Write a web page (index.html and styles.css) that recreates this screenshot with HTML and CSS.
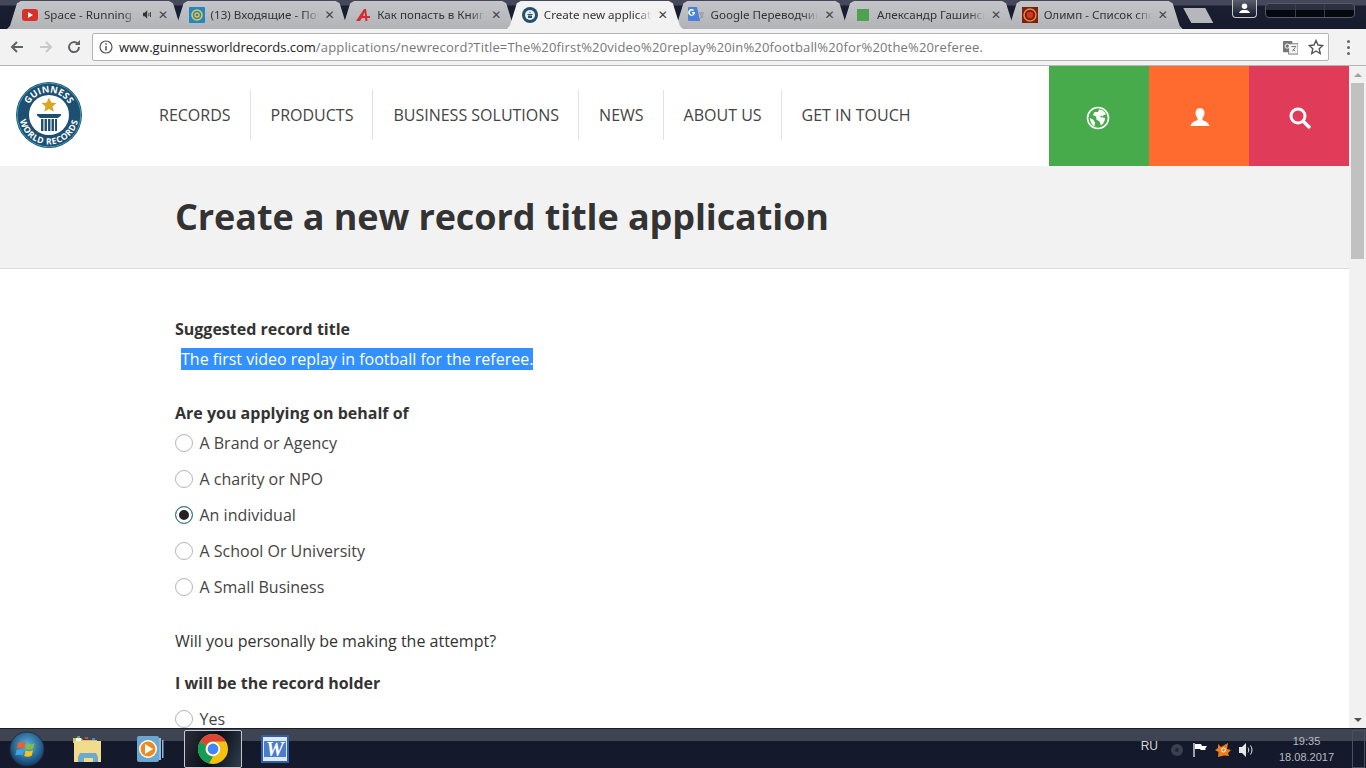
FILE: index.html
```html
<!DOCTYPE html>
<html lang="en">
<head>
<meta charset="utf-8">
<title>Create a new record title application</title>
<link rel="stylesheet" href="styles.css">
</head>
<body>
<div class="screen">
  <div class="tabstrip">
    <div class="tab">
      <svg class="fav" viewBox="0 0 16 16"><rect y="2" width="16" height="12" rx="3" fill="#d9302a"/><path d="M6 5l5 3-5 3z" fill="#fff"/></svg>
      <span class="tab-title">Space - Running</span>
      <svg class="speaker" viewBox="0 0 12 10"><path d="M0 3h2l3-3v10L2 7H0z" fill="#333"/><path d="M7 3v4M9 2v6" stroke="#333" fill="none"/></svg>
      <span class="tab-x">✕</span>
    </div>
    <div class="tab">
      <svg class="fav" viewBox="0 0 16 16"><rect width="16" height="16" rx="1" fill="#1f87c9"/><circle cx="8" cy="8" r="5" fill="none" stroke="#f2c335" stroke-width="1.6"/><circle cx="8" cy="8" r="2" fill="none" stroke="#f2c335" stroke-width="1.4"/></svg>
      <span class="tab-title">(13) Входящие - Почта</span>
      <span class="tab-x">✕</span>
    </div>
    <div class="tab">
      <svg class="fav" viewBox="0 0 16 16"><path d="M1 14L9 2h2l1 7h3v2h-3l.5 3h-2L10 11H7l-2 3zM8 9h2l-.5-4z" fill="#d8292f"/></svg>
      <span class="tab-title">Как попасть в Книгу</span>
      <span class="tab-x">✕</span>
    </div>
    <div class="tab tab-active">
      <svg class="fav" viewBox="0 0 16 16"><circle cx="8" cy="8" r="8" fill="#24506e"/><circle cx="8" cy="8" r="5" fill="#e8eef2"/><path d="M8 4.2l.8 1.6H7.2zM5.5 7h5v1h-5zM6 8.5h4V11H6z" fill="#24506e"/></svg>
      <span class="tab-title">Create new application</span>
      <span class="tab-x">✕</span>
    </div>
    <div class="tab">
      <svg class="fav" viewBox="0 0 16 16"><path d="M0 1a1 1 0 0 1 1-1h8l3 14H1a1 1 0 0 1-1-1z" fill="#4a7fdc"/><path d="M7 5H4v1.500h1.700A2 2 0 1 1 5 4l1-1a3.400 3.400 0 1 0 1 2z" fill="#fff"/><path d="M11 6h5M13.500 5v1M12 12l3-5M12 7l3 4" stroke="#8a93a3" fill="none"/></svg>
      <span class="tab-title">Google Переводчик</span>
      <span class="tab-x">✕</span>
    </div>
    <div class="tab">
      <svg class="fav" viewBox="0 0 16 16"><rect x="2" y="2" width="12" height="12" fill="#4fa04f"/></svg>
      <span class="tab-title">Александр Гашинский</span>
      <span class="tab-x">✕</span>
    </div>
    <div class="tab">
      <svg class="fav" viewBox="0 0 16 16"><rect width="16" height="16" fill="#7d1f10"/><circle cx="8" cy="8" r="6" fill="none" stroke="#e2913a" stroke-width="1.400"/><circle cx="8" cy="8" r="3.200" fill="#d8342a"/></svg>
      <span class="tab-title">Олимп - Список спортсменов</span>
      <span class="tab-x">✕</span>
    </div>
    <div class="new-tab"></div>
    <div class="strip-spacer"></div>
    <div class="avatar-btn">
      <svg viewBox="0 0 14 12"><circle cx="7" cy="3.500" r="3" fill="#fff"/><path d="M1 11c1-3 3-3.500 6-3.500S12 8 13 11z" fill="#fff"/></svg>
    </div>
    <div class="win-controls"><span></span><span></span><span></span></div>
  </div>

  <div class="toolbar">
    <div class="nav-group">
      <svg class="nav-ic" viewBox="0 0 16 16"><path d="M14 8H3M8 3L3 8l5 5" fill="none" stroke="#5f6368" stroke-width="2"/></svg>
      <svg class="nav-ic" viewBox="0 0 16 16"><path d="M2 8h11M8 3l5 5-5 5" fill="none" stroke="#c8c8c8" stroke-width="2"/></svg>
      <svg class="nav-ic" viewBox="0 0 16 16"><path d="M13 8a5 5 0 1 1-1.500-3.500" fill="none" stroke="#5f6368" stroke-width="2"/><path d="M9 6h5V1z" fill="#5f6368"/></svg>
    </div>
    <div class="omnibox">
      <svg class="info" viewBox="0 0 14 14"><circle cx="7" cy="7" r="6" fill="none" stroke="#555" stroke-width="1.200"/><path d="M7 6v4.500M7 3.200v1.500" stroke="#555" stroke-width="1.500"/></svg>
      <span class="url"><span class="url-host">www.guinnessworldrecords.com</span>/applications/newrecord?Title=The%20first%20video%20replay%20in%20football%20for%20the%20referee.</span>
      <svg class="translate" viewBox="0 0 16 16"><rect y="1" width="10" height="12" rx="1" fill="#777"/><rect x="6" y="4" width="10" height="11" fill="#f4f4f4" stroke="#777"/><circle cx="4.500" cy="6.500" r="2.300" fill="none" stroke="#fff"/><path d="M9 7h5M11 10l2 2M13 8l-3 4" stroke="#666" fill="none"/></svg>
      <svg class="star" viewBox="0 0 16 16"><path d="M8 1.500l2 4.500 4.800.5-3.600 3.200 1 4.800L8 12l-4.200 2.500 1-4.800L1.200 6.500 6 6z" fill="none" stroke="#555" stroke-width="1.400"/></svg>
    </div>
    <div class="menu-dots"><i></i><i></i><i></i></div>
  </div>

  <div class="viewport">
    <main class="page">
      <header class="site-header">
        <svg class="logo" viewBox="0 0 66 66">
          <defs>
            <path id="arcTop" d="M10.500 33a22.500 22.500 0 0 1 45 0"/>
            <path id="arcBottom" d="M3.500 33a29.500 29.500 0 0 0 59 0"/>
          </defs>
          <circle cx="33" cy="33" r="33" fill="#1d4f72"/>
          <circle cx="33" cy="33" r="31.800" fill="none" stroke="#3d9cb2" stroke-width="1"/>
          <circle cx="33" cy="33" r="20" fill="#fff"/>
          <text class="logo-text"><textPath href="#arcTop" startOffset="50%" text-anchor="middle">GUINNESS</textPath></text>
          <text class="logo-text logo-text-low"><textPath href="#arcBottom" startOffset="50%" text-anchor="middle">WORLD RECORDS</textPath></text>
          <path d="M33 15.500l2.300 5 5.200.5-4 3.500 1.200 5.200-4.700-2.800-4.700 2.800 1.200-5.200-4-3.500 5.200-.5z" fill="#dba51f"/>
          <path d="M21 32h24v1.500l-3 2.500H24l-3-2.500z" fill="#1d4f72"/>
          <path d="M25 37h16v12H25z" fill="#1d4f72"/>
          <path d="M28 37v12M31.500 37v12M35 37v12M38.500 37v12" stroke="#fff" stroke-width="1.100"/>
        </svg>
        <nav class="main-nav">
          <a>RECORDS</a>
          <a>PRODUCTS</a>
          <a>BUSINESS SOLUTIONS</a>
          <a>NEWS</a>
          <a>ABOUT US</a>
          <a>GET IN TOUCH</a>
        </nav>
        <div class="action-blocks">
          <div class="action action-green">
            <svg viewBox="0 0 24 24"><circle cx="12" cy="12" r="10.500" fill="none" stroke="#fff" stroke-width="1.600"/><path d="M13 3.500c3 0 6 2 7 5l-2.500.5-.5 1.500-2-1-1 1.500 3 .5 2 .5c0 3-1.500 6-4 7.500l-1.500-4-3-2-.5-3L7 9l1.500-3L12 6zM4 12l3 1.500 2 3-.5 4C6 19 4 16 4 12z" fill="#fff"/></svg>
          </div>
          <div class="action action-orange">
            <svg viewBox="0 0 24 24"><path d="M12 2c3 0 4.500 2.200 4.500 5 0 2.200-1 4-2 5v2c2.500 1.200 6 2 7 6H2.500c1-4 4.500-4.800 7-6v-2c-1-1-2-2.800-2-5 0-2.800 1.500-5 4.500-5z" fill="#fff"/></svg>
          </div>
          <div class="action action-red">
            <svg viewBox="0 0 24 24"><circle cx="10" cy="10" r="7" fill="none" stroke="#fff" stroke-width="3"/><path d="M15 15l7 7" stroke="#fff" stroke-width="3.400"/></svg>
          </div>
        </div>
      </header>

      <section class="hero">
        <h1>Create a new record title application</h1>
      </section>

      <form class="record-form">
        <p class="label label-first">Suggested record title</p>
        <p class="suggested"><span class="selected-text">The first video replay in football for the referee.</span></p>

        <p class="label label-behalf">Are you applying on behalf of</p>
        <ul class="options">
          <li><span class="radio"></span>A Brand or Agency</li>
          <li><span class="radio"></span>A charity or NPO</li>
          <li><span class="radio radio-on"></span>An individual</li>
          <li><span class="radio"></span>A School Or University</li>
          <li><span class="radio"></span>A Small Business</li>
        </ul>

        <p class="question">Will you personally be making the attempt?</p>
        <p class="label label-holder">I will be the record holder</p>
        <ul class="options options-holder">
          <li><span class="radio"></span>Yes</li>
        </ul>
      </form>
    </main>
    <aside class="scrollbar">
      <div class="sb-btn"><span class="arrow-up"></span></div>
      <div class="sb-track"><div class="sb-thumb"></div></div>
      <div class="sb-btn"><span class="arrow-down"></span></div>
    </aside>
  </div>

  <footer class="taskbar">
    <div class="start">
      <svg viewBox="0 0 36 36">
        <defs><radialGradient id="orb" cx="50%" cy="40%" r="60%"><stop offset="0" stop-color="#5fb6e0"/><stop offset="1" stop-color="#0e3c6a"/></radialGradient></defs>
        <circle cx="18" cy="18" r="17" fill="url(#orb)" stroke="#22303f"/>
        <path d="M9 12c3-1.500 5-1 7.500 0l-1.200 5.500c-2.500-1-4.500-1.300-7.500 0z" fill="#e8602c"/>
        <path d="M18 12.500c2.500 1 5 1 7.500-.5l-1.200 5.500c-2.500 1.500-5 1.500-7.500.5z" fill="#7fbf3f"/>
        <path d="M7.500 19c3-1.200 5-1 7.500 0L13.800 24.500c-2.500-1-4.500-1.200-7.500 0z" fill="#3ea3e0"/>
        <path d="M16.500 19.500c2.500 1 5 1 7.500-.5l-1.200 5.500c-2.500 1.500-5 1.500-7.500.5z" fill="#f3c51f"/>
      </svg>
    </div>
    <div class="task-item">
      <svg viewBox="0 0 32 32"><path d="M1 5h8l2 2h14v3H1z" fill="#d9c06a"/><path d="M2 8h27v21H2z" fill="#f1dc8e"/><path d="M4 5h5v3H4z" fill="#fff"/><rect x="5" y="3" width="3" height="2" fill="#4caf50"/><rect x="13" y="4" width="3" height="2" fill="#d9453a"/><rect x="20" y="5" width="3" height="2" fill="#3a8ad9"/><path d="M8 20h16l2 4v5h-5v-4H12v4H6v-5z" fill="#6ea9cf"/></svg>
    </div>
    <div class="task-item">
      <svg viewBox="0 0 32 32"><rect x="3" y="3" width="22" height="26" rx="2" fill="#6ca7cf"/><path d="M25 5h2v22h-2zM28 7h1.500v18H28z" fill="#8cbad8"/><circle cx="14" cy="16" r="9" fill="#fff"/><circle cx="14" cy="16" r="7.500" fill="#f08a1d"/><path d="M11 11l8 5-8 5z" fill="#fff"/></svg>
    </div>
    <div class="task-item task-chrome">
      <svg viewBox="0 0 32 32">
        <circle cx="16" cy="16" r="15" fill="#f4c20d"/>
        <path d="M16 1a15 15 0 0 1 13 7.500H16A7.500 7.500 0 0 0 9.300 12.500L3 8.500A15 15 0 0 1 16 1z" fill="#db4437"/>
        <path d="M3 8.500l6.300 4A7.500 7.500 0 0 0 16 23.500L12 30.500A15 15 0 0 1 3 8.500z" fill="#0f9d58"/>
        <circle cx="16" cy="16" r="7.200" fill="#fff"/><circle cx="16" cy="16" r="5.400" fill="#4285f4"/>
      </svg>
    </div>
    <div class="task-item">
      <svg viewBox="0 0 32 32"><rect x="2" y="2" width="28" height="28" fill="#2f5fb3"/><rect x="4" y="4" width="24" height="24" fill="#dfe9f5"/><path d="M5 8h22v16H5z" fill="#4a7ccb"/><text class="word-w" x="16" y="23" text-anchor="middle">W</text></svg>
    </div>
    <div class="tray">
      <span class="lang">RU</span>
      <svg class="tray-ic" viewBox="0 0 16 16"><circle cx="8" cy="8" r="6" fill="#3a404e"/><circle cx="8" cy="8" r="2" fill="#22262f"/></svg>
      <svg class="tray-ic" viewBox="0 0 16 16"><path d="M2 1v14" stroke="#fff" stroke-width="1.200"/><path d="M3 2h6l1 2h5l-2 3 1 1H9L8 7H3z" fill="#fff"/></svg>
      <svg class="tray-ic tray-avast" viewBox="0 0 16 16"><path d="M3 2l3 3 7-4-1 6 4 1-3 3 1 3-5-.5L3 15l.5-5L0 8l3-2z" fill="#f07d1a"/><circle cx="8.500" cy="8" r="2" fill="none" stroke="#fff"/></svg>
      <svg class="tray-ic" viewBox="0 0 16 16"><path d="M1 5h3l4-4v14l-4-4H1z" fill="#e8e8e8"/><path d="M10 5.500c1 1.500 1 3.500 0 5M12.500 3.500c2 3 2 6 0 9" fill="none" stroke="#e8e8e8"/></svg>
      <div class="clock"><span>19:35</span><span>18.08.2017</span></div>
      <div class="show-desktop"></div>
    </div>
  </footer>
</div>
</body>
</html>
```

FILE: styles.css
```css
* { box-sizing: border-box; }
html, body { margin: 0; padding: 0; height: 100%; overflow: hidden; }
body { font-family: "Open Sans", "Noto Sans", sans-serif; color: #333; background: #fff; }
svg { display: block; flex: none; }
p, ul, h1 { margin: 0; padding: 0; }
ul { list-style: none; }

.screen { width: 1366px; height: 768px; display: flex; flex-direction: column; }

/* tab strip */
.tabstrip {
  height: 29px; flex: none; display: flex; padding: 1px 11px 0 7px; overflow: hidden;
  background: linear-gradient(#44485a 0, #44485a 5px, #191e31 6px, #161b2d 100%);
}
.tab {
  width: 176px; flex: none; height: 28px; margin-right: -9.4px; padding: 0 13px 1px 15px;
  display: flex; align-items: center; gap: 6px; position: relative;
  background: linear-gradient(#c4c5c8, #b2b3b6);
  clip-path: polygon(0 100%, 3px 88%, 10px 8%, 14px 0, 162px 0, 166px 8%, 173px 88%, 176px 100%);
  font-family: "Noto Sans", "Open Sans", sans-serif; font-size: 11.6px; color: #333;
}
.tab-active { background: #f2f2f2; z-index: 2; color: #333; }
.fav { width: 16px; height: 16px; }
.tab-title {
  flex: 1; min-width: 0; overflow: hidden; white-space: nowrap;
  -webkit-mask-image: linear-gradient(90deg, #000 86%, transparent 100%);
  mask-image: linear-gradient(90deg, #000 86%, transparent 100%);
}
.speaker { width: 10px; height: 9px; margin: 0 -1px 0 0; }
.tab-x { font-size: 12px; color: #444; width: 12px; line-height: 1; font-family: "DejaVu Sans", sans-serif; font-weight: 700; }
.new-tab {
  width: 30px; height: 15px; margin: 7px 0 0 10px; flex: none;
  background: #b6b7ba; clip-path: polygon(0 0, 22px 0, 30px 100%, 8px 100%);
}
.strip-spacer { flex: 1; }
.avatar-btn {
  width: 25px; height: 18px; margin-top: -1px; flex: none; display: flex; align-items: center; justify-content: center;
  background: linear-gradient(#5a5e6c, #15192a); border: 1px solid #c8c8cc; border-top: 0; border-radius: 0 0 4px 4px;
}
.avatar-btn svg { width: 13px; height: 11px; }
.win-controls {
  width: 90px; height: 15px; margin: 2px 0 0 8px; flex: none; display: flex;
  border: 1px solid #55596a; border-radius: 4px; background: linear-gradient(#2c3040 50%, #06080f 50%);
}
.win-controls span { flex: 1; border-right: 1px solid #3a3e4e; }
.win-controls span:last-child { border-right: 0; }

/* toolbar */
.toolbar {
  height: 37px; flex: none; display: flex; align-items: center; padding: 0 0 0 9px;
  background: #f2f2f2; border-bottom: 1px solid #b5b5b5;
}
.nav-group { width: 83px; flex: none; display: flex; gap: 12.5px; }
.nav-ic { width: 16px; height: 16px; }
.omnibox {
  width: 1237px; height: 28px; flex: none; display: flex; align-items: center; padding: 0 4px 0 6px;
  background: #fff; border: 1px solid #b4b4b4; border-radius: 2px;
}
.info { width: 14px; height: 14px; margin-right: 6px; }
.url { flex: 1; white-space: nowrap; font-family: "Open Sans", sans-serif; font-size: 13px; letter-spacing: 0.17px; color: #777; }
.url-host { color: #222; letter-spacing: -0.03px; }
.translate { width: 15px; height: 15px; margin-right: 10px; }
.star { width: 16px; height: 16px; }
.menu-dots { width: 22px; flex: none; display: flex; flex-direction: column; align-items: center; gap: 3px; margin-left: 8px; }
.menu-dots i { width: 3px; height: 3px; background: #666; border-radius: 50%; }

/* viewport */
.viewport { flex: 1; min-height: 0; display: flex; }
.page { flex: 1; min-width: 0; overflow: hidden; }
.scrollbar { width: 17px; flex: none; display: flex; flex-direction: column; background: #f1f1f1; }
.sb-btn { height: 17px; flex: none; display: flex; align-items: center; justify-content: center; }
.arrow-up { border: 4px solid transparent; border-top: 0; border-bottom: 4px solid #a3a3a3; }
.arrow-down { border: 4px solid transparent; border-bottom: 0; border-top: 4px solid #505050; }
.sb-track { flex: 1; padding: 0 2px; }
.sb-thumb { height: 176px; background: #c1c1c1; }

.site-header { height: 100px; display: flex; align-items: flex-start; background: #fff; }
.logo { width: 66px; height: 66px; margin: 16px 0 0 16px; }
.logo-text { font-family: "Open Sans", sans-serif; font-size: 9.2px; font-weight: 700; fill: #fff; letter-spacing: .2px; }
.logo-text-low { font-size: 8.6px; letter-spacing: .6px; }
.main-nav { display: flex; margin: 24px 0 0 57px; }
.main-nav a {
  height: 50px; line-height: 50px; padding: 0 19px 0 20px; font-size: 16px; color: #444;
  border-right: 1px solid #e2e2e2; white-space: nowrap;
}
.main-nav a:last-child { border-right: 0; }
.action-blocks { margin-left: auto; display: flex; }
.action { width: 100px; height: 100px; display: flex; align-items: center; justify-content: center; }
.action svg { width: 24px; height: 24px; margin-top: 4px; }
.action-green { background: #47aa4b; padding-right: 2px; }
.action-orange { background: #ff6a2e; padding-left: 2px; }
.action-red { background: #e03b58; padding-left: 2px; }

.hero { height: 103px; padding: 28px 0 0 175px; background: #f2f2f2; border-bottom: 1px solid #ddd; }
.hero h1 { font-size: 36px; line-height: 46px; font-weight: 700; color: #333; letter-spacing: -0.1px; }

.record-form { padding-left: 175px; font-size: 16px; line-height: 22px; color: #333; }
.label { font-weight: 700; }
.label-first { margin-top: 49px; }
.suggested { margin-top: 8px; padding-left: 6px; }
.selected-text { background: #3390ff; color: #fff; }
.label-behalf { margin-top: 32px; }
.options { margin-top: 1px; }
.options li { height: 36px; display: flex; align-items: center; gap: 6.5px; color: #444; }
.radio { width: 18px; height: 18px; border: 1px solid #b5b5b5; border-radius: 50%; background: #fff; flex: none; }
.radio-on { border-color: #2f7f99; box-shadow: inset 0 0 0 3px #fff; background: #222; }
.question { margin-top: 25px; }
.label-holder { margin-top: 20px; }
.options-holder { margin-top: 7px; }

/* taskbar */
.taskbar {
  height: 40px; flex: none; display: flex; align-items: center; padding-left: 5px;
  background: linear-gradient(#3f4453 0, #3f4453 12px, #13182a 12px, #151a2c 100%);
  border-top: 1px solid #1a1d28;
}
.start { width: 44px; height: 38px; margin-right: 6px; display: flex; align-items: center; justify-content: center; }
.start svg { width: 36px; height: 36px; }
.task-item { width: 58px; height: 38px; margin-left: 4px; display: flex; align-items: center; justify-content: center; flex: none; }
.task-item svg { width: 32px; height: 32px; }
.task-chrome {
  margin-left: 5px;
  border: 1px solid #c4c8d0; border-radius: 2px;
  background: linear-gradient(110deg, #2a2e3a, #0a0d16 50%, #2f3d4c);
}
.tray { margin-left: auto; display: flex; align-items: center; height: 100%; color: #d8d8d8; font-family: "Liberation Sans", sans-serif; font-size: 12px; }
.lang { margin-right: 11px; margin-top: -5px; }
.tray-ic { width: 16px; height: 16px; margin-right: 7px; margin-top: 2px; }
.clock { width: 73px; margin-left: 9px; display: flex; flex-direction: column; align-items: center; font-size: 11px; line-height: 16px; color: #b9bcc4; }
.show-desktop { width: 13px; height: 38px; margin: 0 1px 0 9px; border: 1px solid #4b5060; }

.word-w { font-family: "Liberation Serif", serif; font-size: 20px; font-weight: 700; font-style: italic; fill: #fff; }
```
